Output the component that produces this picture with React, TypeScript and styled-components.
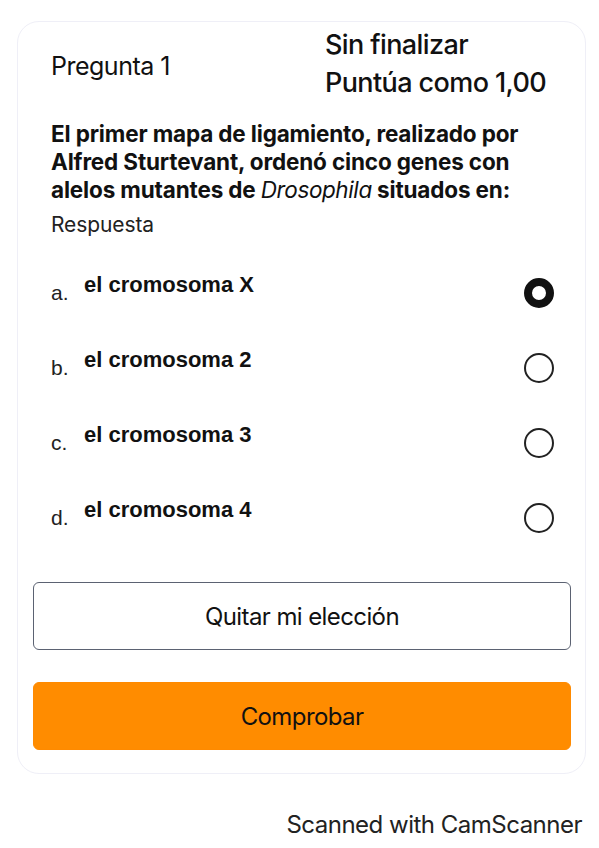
import React from "react";
import styled, { createGlobalStyle } from "styled-components";

const Global = createGlobalStyle`
  html, body { margin: 0; padding: 0; background: #ffffff; }
  body { font-family: Inter, "Noto Sans", sans-serif; color: #111; }
`;

const Page = styled.div`
  width: 599px;
  min-height: 848px;
  padding: 21px 13px 0 17px;
  box-sizing: border-box;
  display: flex;
  flex-direction: column;
`;

const Card = styled.div`
  border: 1px solid #efeff7;
  border-radius: 22px;
  padding: 8px 15px 23px 15px;
  display: flex;
  flex-direction: column;
`;

const Header = styled.div`
  display: grid;
  grid-template-columns: 274px 1fr;
  align-items: center;
  padding-left: 18px;
`;

const QNo = styled.div`
  font-size: 25px;
  letter-spacing: -0.5px;
  padding-top: 4px;
`;

const State = styled.div`
  display: flex;
  flex-direction: column;
  gap: 8px;
  font-size: 27px;
  font-weight: 500;
  letter-spacing: -0.6px;
  line-height: 30px;
  white-space: nowrap;
`;

const QText = styled.div`
  margin-top: 22px;
  padding-left: 18px;
  max-width: 490px;
  font-size: 22.5px;
  font-weight: 700;
  line-height: 28px;
  letter-spacing: -0.15px;
  em { font-weight: 400; letter-spacing: -0.4px; }
`;

const Answer = styled.div`
  padding-left: 18px;
  margin-top: 8px;
  font-size: 21px;
  line-height: 26px;
  letter-spacing: -0.1px;
  color: #222;
`;

const Options = styled.div`
  display: flex;
  flex-direction: column;
  gap: 41px;
  margin-top: 34px;
  padding-left: 18px;
  padding-right: 16px;
`;

const Option = styled.div`
  display: grid;
  grid-template-columns: 33px 1fr 30px;
  height: 34px;
`;

const Letter = styled.span`
  font-family: "Liberation Sans", Arial, sans-serif;
  font-size: 21px;
  line-height: 26px;
  padding-top: 8px;
  color: #222;
`;

const OptText = styled.span`
  font-family: "Liberation Sans", Arial, sans-serif;
  font-size: 22px;
  font-weight: 700;
  line-height: 26px;
  color: #111;
`;

const Radio = styled.span<{ $checked?: boolean }>`
  width: 30px;
  height: 30px;
  margin-top: 6px;
  box-sizing: border-box;
  border-radius: 50%;
  border: ${(p) => (p.$checked ? "8px solid #111" : "2px solid #222")};
  background: #fff;
`;

const Button = styled.button<{ $primary?: boolean }>`
  display: block;
  width: 538px;
  height: 68px;
  box-sizing: border-box;
  font-family: Inter, "Noto Sans", sans-serif;
  font-size: 24px;
  letter-spacing: -0.6px;
  color: #111;
  border-radius: 6px;
  border: ${(p) => (p.$primary ? "1px solid #ff8a00" : "1.5px solid #5b6272")};
  background: ${(p) => (p.$primary ? "#ff8c00" : "#ffffff")};
  margin-top: ${(p) => (p.$primary ? "32px" : "51px")};
`;

const Footer = styled.div`
  text-align: right;
  padding-right: 4px;
  margin-top: 36px;
  font-family: Inter, "Noto Sans", sans-serif;
  font-size: 24px;
  line-height: 29px;
  letter-spacing: -0.5px;
  color: #222;
`;

const options = [
  { l: "a.", t: "el cromosoma X", c: true },
  { l: "b.", t: "el cromosoma 2" },
  { l: "c.", t: "el cromosoma 3" },
  { l: "d.", t: "el cromosoma 4" },
];

export default function App() {
  return (
    <>
      <Global />
      <Page>
        <Card>
          <Header>
            <QNo>Pregunta 1</QNo>
            <State>
              <span>Sin finalizar</span>
              <span>Puntúa como 1,00</span>
            </State>
          </Header>
          <QText>
            <span>El primer mapa de ligamiento, realizado por Alfred Sturtevant, ordenó cinco genes con </span>
            <span>alelos mutantes de </span>
            <em>Drosophila</em>
            <span> situados en:</span>
          </QText>
          <Answer>Respuesta</Answer>
          <Options>
            {options.map((o) => (
              <Option key={o.l}>
                <Letter>{o.l}</Letter>
                <OptText>{o.t}</OptText>
                <Radio $checked={o.c} />
              </Option>
            ))}
          </Options>
          <Button>Quitar mi elección</Button>
          <Button $primary>Comprobar</Button>
        </Card>
        <Footer>Scanned with CamScanner</Footer>
      </Page>
    </>
  );
}
